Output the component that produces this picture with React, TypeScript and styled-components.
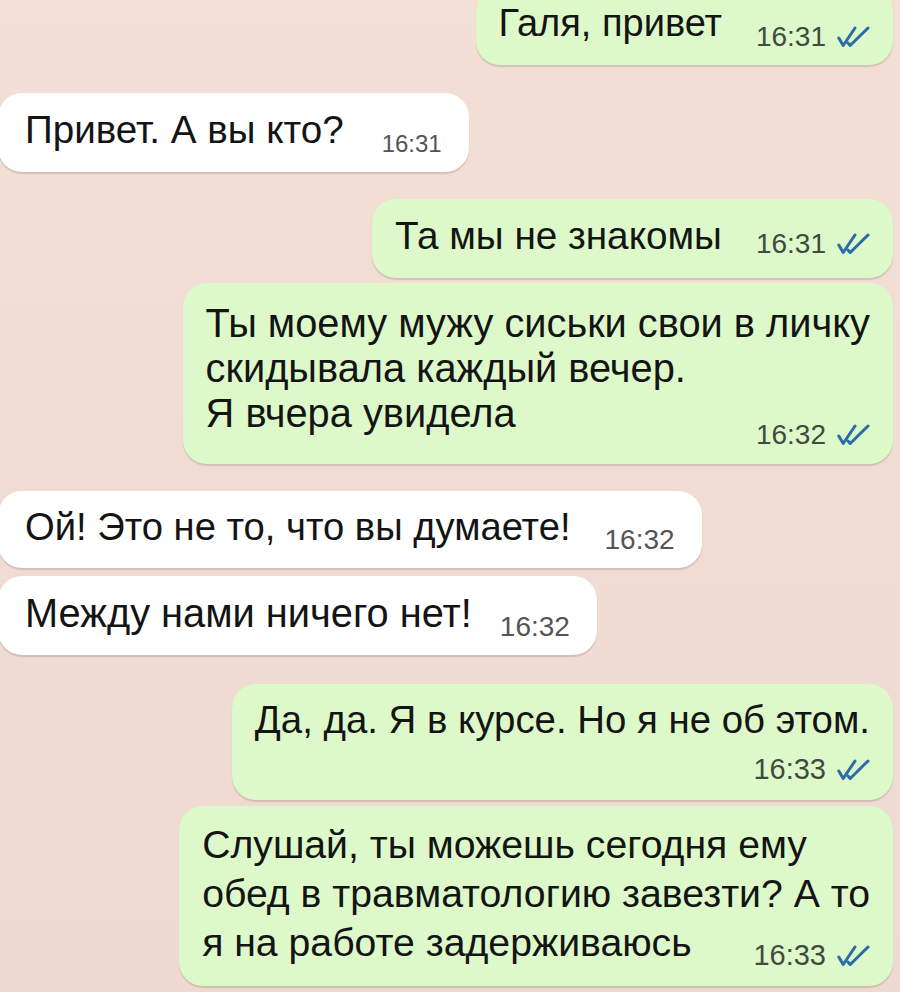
import * as React from 'react';
import styled, { createGlobalStyle } from 'styled-components';

interface IMessage {
  out: boolean;
  size: number;
  lh: number;
  gap: number;
  pad?: [number, number];
  lines: string[];
  time: string;
  timeSize: number;
  metaTop: number;
  lead?: number;
  stacked?: boolean;
}

const messages: IMessage[] = [
  { out: true, size: 38, lh: 44, gap: -13, lines: ['Галя, привет'], time: '16:31', timeSize: 28, metaTop: 20, pad: [14, 12] },
  { out: false, size: 38.6, lh: 45, gap: 28, lines: ['Привет. А вы кто?'], time: '16:31', timeSize: 24, metaTop: 23, lead: 38 },
  {
    out: true, size: 38.7, lh: 45, gap: 27, pad: [14, 18], lines: ['Та мы не знакомы'],
    time: '16:31', timeSize: 28, metaTop: 15,
  },
  {
    out: true, size: 39.8, lh: 45, gap: 5, pad: [18, 13],
    lines: ['Ты моему мужу сиськи свои в личку', 'скидывала каждый вечер.', 'Я вчера увидела'],
    time: '16:32', timeSize: 28, metaTop: -17, stacked: true,
  },
  { out: false, size: 38.2, lh: 44, gap: 27, pad: [14, 12], lines: ['Ой! Это не то, что вы думаете!'], time: '16:32', timeSize: 28, metaTop: 19 },
  {
    out: false, size: 39.8, lh: 46, gap: 8, pad: [14, 12], lines: ['Между нами ничего нет!'],
    time: '16:32', timeSize: 28, metaTop: 21, lead: 28,
  },
  {
    out: true, size: 38.4, lh: 44, gap: 29, lines: ['Да, да. Я в курсе. Но я не об этом.'],
    time: '16:33', timeSize: 29, metaTop: 11, stacked: true,
  },
  {
    out: true, size: 39.2, lh: 49, gap: 6,
    lines: ['Слушай, ты можешь сегодня ему', 'обед в травматологию завезти? А то', 'я на работе задерживаюсь'],
    time: '16:33', timeSize: 29, metaTop: -28, stacked: true,
  },
];

const GlobalStyle = createGlobalStyle`
  html, body {
    margin: 0;
    padding: 0;
    background: #f2ded5;
  }
  body {
    font-family: "Liberation Sans", Arial, sans-serif;
    -webkit-font-smoothing: antialiased;
  }
`;

const Screen = styled.div`
  width: 900px;
  height: 992px;
  overflow: hidden;
  background: linear-gradient(180deg, #f2dfd6 0%, #f1dcd3 55%, #efdad2 100%);
  display: flex;
  flex-direction: column;
`;

const Bubble = styled.div<{
  $out: boolean;
  $gap: number;
  $pad: [number, number];
  $lead: number;
  $stacked?: boolean;
}>`
  align-self: ${(p) => (p.$out ? 'flex-end' : 'flex-start')};
  flex-shrink: 0;
  display: flex;
  flex-direction: ${(p) => (p.$stacked ? 'column' : 'row')};
  align-items: flex-start;
  column-gap: ${(p) => p.$lead}px;
  margin: ${(p) => p.$gap}px ${(p) => (p.$out ? '7px' : '0')} 0 ${(p) => (p.$out ? '0' : '-2px')};
  padding: ${(p) => p.$pad[0]}px ${(p) => (p.$out ? '23px' : '27px')} ${(p) => p.$pad[1]}px
    ${(p) => (p.$out ? '23px' : '27px')};
  border-radius: 24px;
  background: ${(p) => (p.$out ? '#ddf9ca' : '#ffffff')};
  box-shadow: 0 1.5px 1px rgba(120, 100, 90, 0.24);
`;

const Text = styled.div<{ $size: number; $lh: number }>`
  font-size: ${(p) => p.$size}px;
  line-height: ${(p) => p.$lh}px;
  color: #141414;
  white-space: nowrap;
`;

const Meta = styled.div<{ $top: number; $size: number }>`
  display: flex;
  align-items: center;
  gap: 11px;
  margin-top: ${(p) => p.$top}px;
  margin-left: auto;
  font-size: ${(p) => p.$size}px;
  line-height: ${(p) => p.$size + 4}px;
`;

const Time = styled.span<{ $out: boolean }>`
  color: ${(p) => (p.$out ? '#3f4b3e' : '#555555')};
  white-space: nowrap;
`;

const TicksIcon = () => (
  <svg width="33" height="22" viewBox="0 0 33 22" fill="none">
    <path d="M1.8 12 L6.2 19.5 L18 2" stroke="#2a6ca8" strokeWidth="3" strokeLinecap="round" strokeLinejoin="round" />
    <path d="M11 17 L13.2 19.5 L31 2" stroke="#2a6ca8" strokeWidth="3" strokeLinecap="round" strokeLinejoin="round" />
  </svg>
);

export default function App() {
  return (
    <Screen>
      <GlobalStyle />
      {messages.map((m, i) => (
        <Bubble
          key={i}
          $out={m.out}
          $gap={m.gap}
          $pad={m.pad || [14, 14]}
          $lead={m.lead ?? 34}
          $stacked={m.stacked}
        >
          <Text $size={m.size} $lh={m.lh}>
            {m.lines.map((line, j) => (
              <div key={j}>{line}</div>
            ))}
          </Text>
          <Meta $top={m.metaTop} $size={m.timeSize}>
            <Time $out={m.out}>{m.time}</Time>
            {m.out && <TicksIcon />}
          </Meta>
        </Bubble>
      ))}
    </Screen>
  );
}
